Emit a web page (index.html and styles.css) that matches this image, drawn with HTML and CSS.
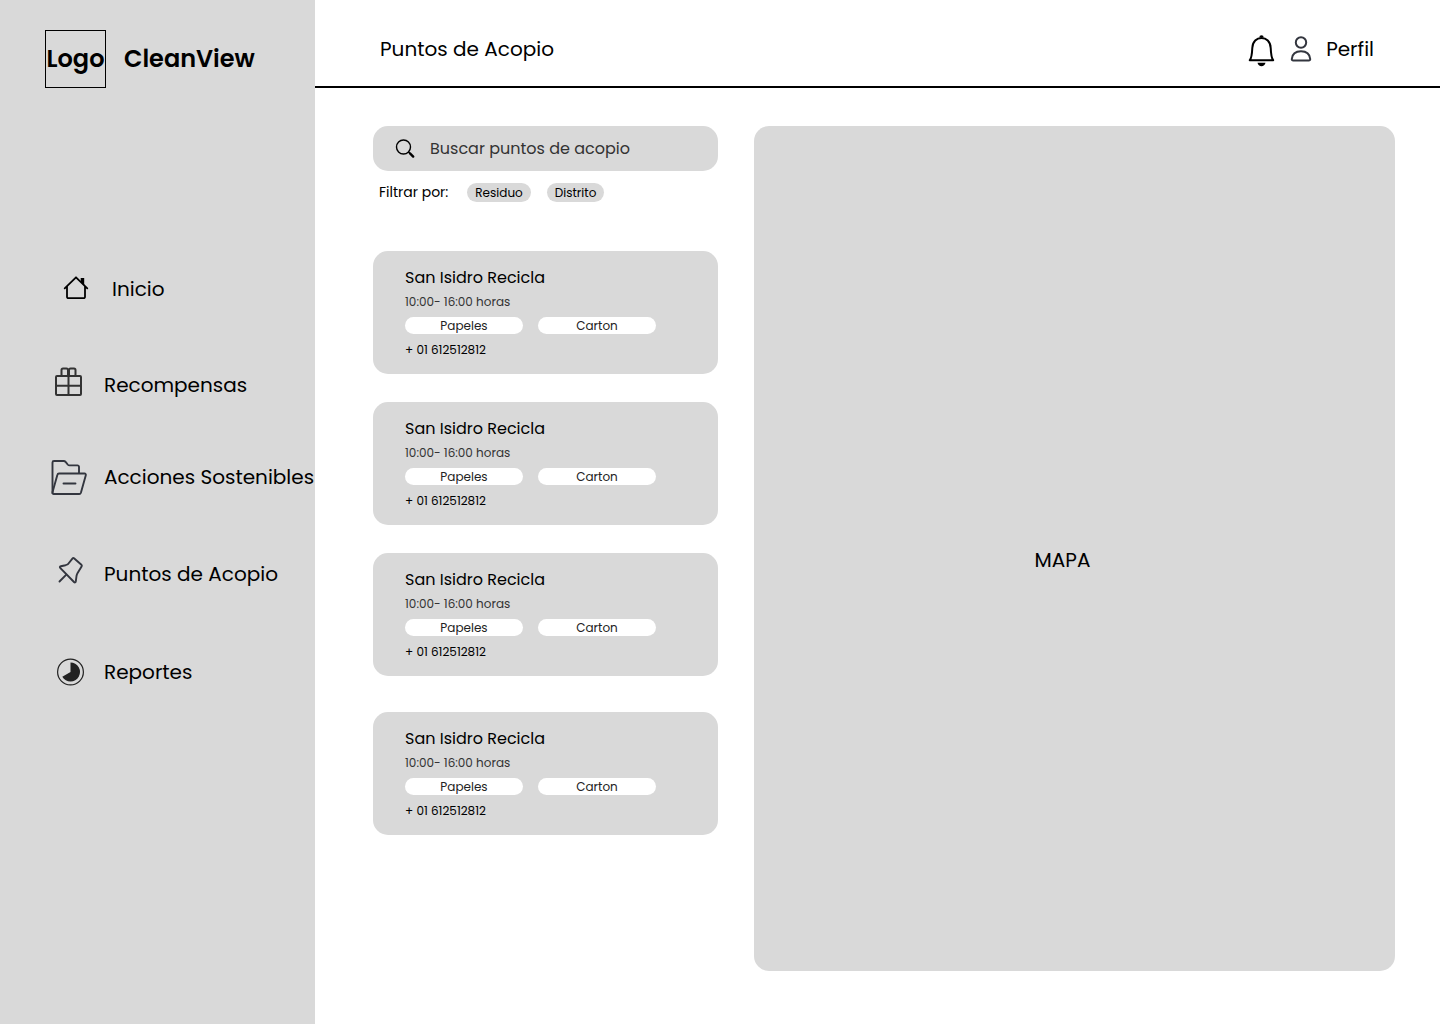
FILE: index.html
```html
<!DOCTYPE html>
<html lang="es">
<head>
  <meta charset="utf-8">
  <meta name="viewport" content="width=device-width, initial-scale=1">
  <title>CleanView - Puntos de Acopio</title>
  <link rel="stylesheet" href="styles.css">
</head>
<body>
  <div class="app">
    <aside class="sidebar">
      <div class="brand">
        <span class="brand-logo">Logo</span>
        <span class="brand-name">CleanView</span>
      </div>
      <nav class="nav" aria-label="Principal">
        <a class="nav-link nav-link-home" href="#inicio">
          <svg class="nav-icon" viewBox="0 0 40 40" aria-hidden="true">
            <path d="M11 17.500v10.300a1.400 1.400 0 0 0 1.400 1.400h15.200a1.400 1.400 0 0 0 1.400-1.400V17.500M8.700 19.300 20 8.300l11.300 11" fill="none" stroke="#000" stroke-width="1.800" stroke-linejoin="round" stroke-linecap="round"/>
            <path d="M24.700 9h3.500v7l-3.500-3.400z"/>
          </svg>
          <span>Inicio</span>
        </a>
        <a class="nav-link" href="#recompensas">
          <svg class="nav-icon" viewBox="0 0 40 40" aria-hidden="true">
            <g fill="none" stroke="#333" stroke-width="2">
              <rect x="8" y="11" width="25" height="19" rx="1"/>
              <path d="M8 20.800h25M20.500 11v19"/>
              <rect x="13.500" y="3.500" width="6.500" height="7.500" rx="1.500"/>
              <rect x="21" y="3.500" width="6.500" height="7.500" rx="1.500"/>
            </g>
          </svg>
          <span>Recompensas</span>
        </a>
        <a class="nav-link" href="#acciones">
          <svg class="nav-icon" viewBox="0 0 40 40" aria-hidden="true">
            <g fill="none" stroke="#33363f" stroke-width="1.900" stroke-linejoin="round" stroke-linecap="round">
              <path d="M4.500 36V5.500A1.500 1.500 0 0 1 6 4h9.700c1 0 1.500.400 2.100 1.100l1.900 2.400c.5.600 1 .9 1.900.9H29.500a1.500 1.500 0 0 1 1.500 1.500V16"/>
              <path d="M11 16.500h25.500a1.300 1.300 0 0 1 1.300 1.700l-4.900 17.600a1.800 1.800 0 0 1-1.700 1.200H5.700A1.300 1.300 0 0 1 4.500 35.300L9.400 17.800a1.700 1.700 0 0 1 1.600-1.300zM15.500 26.500h12"/>
            </g>
          </svg>
          <span>Acciones Sostenibles</span>
        </a>
        <a class="nav-link" href="#puntos" aria-current="page">
          <svg class="nav-icon" viewBox="0 0 40 40" aria-hidden="true">
            <g fill="none" stroke="#33363f" stroke-width="1.900" stroke-linejoin="round" stroke-linecap="round">
              <path d="M26 4.300 33.400 10.700c.6.600.7 1 .2 1.900l-4 6.400c-.6 1-.9 1.700-1.100 3l-.7 5.400c-.2 1.200-1 1.400-1.800.6L12.400 14.200c-.9-.9-.7-1.700.5-2l4.600-1c1.100-.3 1.700-.6 2.600-1.200l4.300-5.400c.5-.6 1-.8 1.600-.3z"/>
              <path d="m18.300 20.700-6.800 6.800"/>
            </g>
          </svg>
          <span>Puntos de Acopio</span>
        </a>
        <a class="nav-link" href="#reportes">
          <svg class="nav-icon" viewBox="0 0 40 40" aria-hidden="true">
            <circle cx="22.500" cy="20" r="12.900" fill="none" stroke="#222" stroke-width="1.200"/>
            <path d="M22.500 20v-9.500a9.500 9.500 0 1 1-8.200 14.300z" fill="#222"/>
          </svg>
          <span>Reportes</span>
        </a>
      </nav>
    </aside>

    <div class="page">
      <header class="topbar">
        <h1 class="title">Puntos de Acopio</h1>
        <div class="account">
          <button class="bell" type="button" aria-label="Notificaciones">
            <svg viewBox="0 0 28 36" width="28" height="36" aria-hidden="true">
              <path d="M1.800 29.200h23.400c-1.800-2.200-2.200-5.500-2.500-12.200C22.400 10.500 18.300 7 13.500 7S4.600 10.500 4.300 17c-.3 6.700-.7 10-2.500 12.200z" fill="none" stroke="#000" stroke-width="2" stroke-linejoin="round"/>
              <path d="M11.300 6.500a2.200 2.200 0 0 1 4.400 0zM9.500 31.800h8c-.5 2.200-2 3.400-4 3.400s-3.500-1.200-4-3.400z"/>
            </svg>
          </button>
          <a class="profile" href="#perfil">
            <svg viewBox="0 0 22 28" width="22" height="28" aria-hidden="true">
              <g fill="none" stroke="#33363f" stroke-width="2">
                <circle cx="11" cy="7.500" r="5.200"/>
                <path d="M3.200 25.500h15.600c.9 0 1.500-.6 1.400-1.500-.5-5-3.900-7.700-9.200-7.700S2.300 19 1.800 24c-.1.900.5 1.500 1.400 1.500z"/>
              </g>
            </svg>
            <span>Perfil</span>
          </a>
        </div>
      </header>

      <main class="content">
        <section class="finder" aria-label="Lista de puntos de acopio">
          <label class="search">
            <svg viewBox="0 0 20 20" width="20" height="20" aria-hidden="true">
              <circle cx="8.500" cy="8" r="7" fill="none" stroke="#000" stroke-width="1.400"/>
              <path d="m13.400 12.800 1.600 1.600" stroke="#000" stroke-width="1.400"/>
              <path d="m15 14.400 3.200 3.200" stroke="#000" stroke-width="2.400" stroke-linecap="round"/>
            </svg>
            <input class="search-input" type="text" placeholder="Buscar puntos de acopio" aria-label="Buscar puntos de acopio">
          </label>
          <div class="filters">
            <span class="filters-label">Filtrar por:</span>
            <button class="filter" type="button">Residuo</button>
            <button class="filter" type="button">Distrito</button>
          </div>
          <ul class="cards">
            <li class="card">
              <h2 class="card-title">San Isidro Recicla</h2>
              <p class="card-hours">10:00- 16:00 horas</p>
              <div class="tags"><span class="tag">Papeles</span><span class="tag">Carton</span></div>
              <p class="card-phone">+ 01 612512812</p>
            </li>
            <li class="card">
              <h2 class="card-title">San Isidro Recicla</h2>
              <p class="card-hours">10:00- 16:00 horas</p>
              <div class="tags"><span class="tag">Papeles</span><span class="tag">Carton</span></div>
              <p class="card-phone">+ 01 612512812</p>
            </li>
            <li class="card">
              <h2 class="card-title">San Isidro Recicla</h2>
              <p class="card-hours">10:00- 16:00 horas</p>
              <div class="tags"><span class="tag">Papeles</span><span class="tag">Carton</span></div>
              <p class="card-phone">+ 01 612512812</p>
            </li>
            <li class="card">
              <h2 class="card-title">San Isidro Recicla</h2>
              <p class="card-hours">10:00- 16:00 horas</p>
              <div class="tags"><span class="tag">Papeles</span><span class="tag">Carton</span></div>
              <p class="card-phone">+ 01 612512812</p>
            </li>
          </ul>
        </section>
        <section class="map" aria-label="Mapa">MAPA</section>
      </main>
    </div>
  </div>
</body>
</html>
```
FILE: styles.css
```css
* {
  box-sizing: border-box;
}

body,
h1,
h2,
p,
ul {
  margin: 0;
  padding: 0;
}

body {
  background: #fff;
  color: #000;
  font-family: Poppins, Inter, sans-serif;
  font-size: 20px;
  line-height: 30px;
}

a {
  color: inherit;
  text-decoration: none;
}

button,
input {
  border: 0;
  padding: 0;
  background: none;
  color: inherit;
  font: inherit;
}

button {
  cursor: pointer;
}

svg {
  display: block;
  flex: none;
}

.app {
  display: grid;
  grid-template-columns: 315px 1fr;
  min-height: 100vh;
}

/* Sidebar */

.sidebar {
  padding-top: 30px;
  background: #d9d9d9;
}

.brand {
  display: flex;
  align-items: center;
  gap: 18px;
  padding-left: 45px;
  font-size: 24px;
  font-weight: 600;
}

.brand-logo {
  display: flex;
  align-items: center;
  justify-content: center;
  width: 61px;
  height: 58px;
  border: 1px solid #000;
}

.nav {
  display: grid;
  grid-template-rows: 96px 96px 88px 106px 90px;
  margin-top: 153px;
}

.nav-link {
  display: flex;
  align-items: center;
  gap: 16px;
  padding-left: 48px;
  white-space: nowrap;
}

.nav-link-home {
  padding-left: 56px;
}

.nav-icon {
  width: 40px;
  height: 40px;
}

/* Top bar */

.page {
  display: flex;
  flex-direction: column;
  min-width: 0;
}

.topbar {
  display: flex;
  align-items: center;
  justify-content: space-between;
  height: 88px;
  padding: 11px 66px 0 65px;
  border-bottom: 2px solid #000;
}

.title {
  font-size: 20px;
  font-weight: 400;
}

.account,
.profile {
  display: flex;
  align-items: center;
  gap: 14px;
}

/* Content */

.content {
  display: flex;
  flex: 1;
  gap: 36px;
  padding: 38px 45px 53px 58px;
}

.finder {
  flex: none;
  width: 345px;
}

.search {
  display: flex;
  align-items: center;
  gap: 15px;
  height: 45px;
  padding: 0 22px;
  border-radius: 15px;
  background: #d9d9d9;
}

.search-input {
  flex: 1;
  min-width: 0;
  font-size: 16px;
  line-height: 24px;
}

.search-input::placeholder {
  color: #333;
  opacity: 1;
}

.filters {
  display: flex;
  align-items: center;
  gap: 16px;
  margin-top: 12px;
  padding-left: 6px;
  font-size: 14px;
  line-height: 19px;
}

.filters-label {
  padding-right: 3px;
}

.filter {
  padding: 0 8px;
  border-radius: 10px;
  background: #d9d9d9;
  font-size: 12px;
  line-height: 19px;
}

.cards {
  display: grid;
  gap: 28px;
  margin-top: 49px;
  list-style: none;
}

.card {
  padding: 15px 32px;
  border-radius: 15px;
  background: #d9d9d9;
  font-size: 12px;
  line-height: 18px;
}

.card:last-child {
  margin-top: 8px;
}

.card-title {
  font-size: 16px;
  font-weight: 400;
  line-height: 24px;
}

.card-hours {
  margin-top: 3px;
  color: #333;
}

.tags {
  display: flex;
  gap: 15px;
  margin-top: 6px;
}

.tag {
  width: 118px;
  border-radius: 9px;
  background: #fff;
  color: #222;
  line-height: 17px;
  text-align: center;
}

.card-phone {
  margin-top: 7px;
}

.map {
  display: flex;
  flex: 1;
  align-items: center;
  justify-content: center;
  padding: 22px 24px 0 0;
  border-radius: 15px;
  background: #d9d9d9;
}
```
